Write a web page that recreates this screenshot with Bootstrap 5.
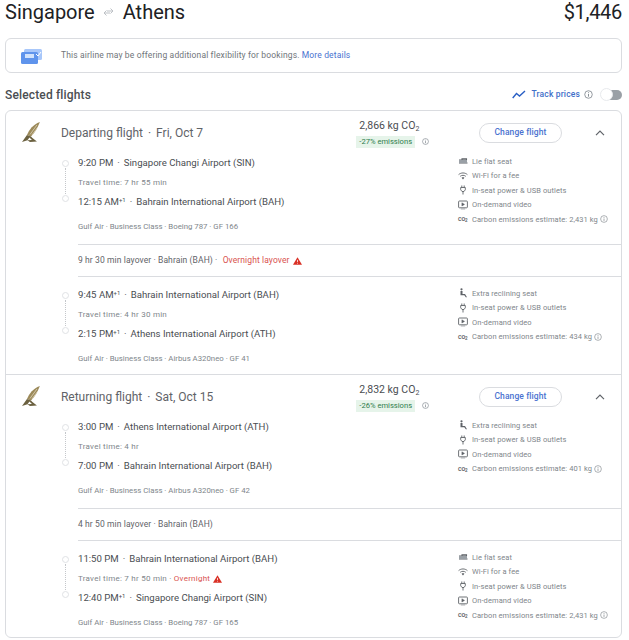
<!DOCTYPE html>
<html lang="en">

<head>
    <meta charset="UTF-8">
    <meta name="viewport" content="width=device-width, initial-scale=1">
    <title>Selected flights</title>
    <link href="https://cdn.jsdelivr.net/npm/bootstrap@5.3.0/dist/css/bootstrap.min.css" rel="stylesheet">
    <style>
        body { font-family: Roboto, "Liberation Sans", sans-serif; color: #3c4043; font-size: 10px; background: #fff; }
        .page-wrap { padding: 0 7px 0 5px; }
        .trip-head { height: 38px; padding-top: 1px; color: #202124; font-size: 20px; line-height: 22px; }
        .swap-icon { margin: 0 9px 0 8px; }
        .trip-price { font-size: 20px; letter-spacing: -.3px; }
        .notice-card { height: 35px; border-color: #dadce0; border-radius: 6px; padding-left: 15px; font-size: 8.5px; letter-spacing: .14px; color: #70757a; }
        .notice-card a { color: #4a72d0; text-decoration: none; }
        .notice-text { margin-left: 19px; }
        .sel-head { height: 37px; padding-top: 6px; font-size: 12px; font-weight: 500; color: #4a4e52; letter-spacing: .15px; }
        .track-label { color: #3f6fc9; font-size: 8.5px; margin: 0 4px 0 6px; }
        .fake-switch { width: 21px; height: 10px; margin-left: 4px; background: #9aa0a6; border-radius: 5px; position: relative; }
        .fake-switch::before { content: ""; position: absolute; left: -1px; top: -2px; width: 13px; height: 13px; border-radius: 50%; background: #fff; border: 1px solid #e8eaed; }
        .flights-card { border-color: #dadce0; border-radius: 6px; height: 528px; }
        .flight-part { border-bottom: 1px solid #dadce0; }
        .flight-part:last-child { border-bottom: 0; }
        .part-head { height: 41px; padding: 2px 0 0 16px; }
        .air-logo { width: 18px; margin-top: -2px; }
        .part-title { width: 300px; margin-left: 21px; font-size: 12px; color: #5f6368; padding-top: 1px; }
        .title-dot { margin: 0 5px; }
        .co2-box { width: 120px; margin-top: 2px; }
        .co2-num { font-size: 10.5px; line-height: 14px; color: #4a4e52; }
        .co2-num sub { font-size: 7px; }
        .co2-pill { display: inline-block; background: #e6f4ea; color: #2e7d4a; font-size: 7.6px; line-height: 12px; padding: 0 3px; margin-left: -3px; }
        .change-btn { width: 84px; height: 20px; padding: 0; font-size: 8.5px; font-weight: 500; color: #4a72d0; border: 1px solid #dadce0; border-radius: 10px; letter-spacing: .1px; }
        .chev-box { width: 59px; }
        .seg-row { margin-left: 54px; padding: 1px 0 7px; }
        .seg-row.pad-top { padding-top: 8px; }
        .seg-row.pad-end { padding-bottom: 5px; }
        .seg-row.pad-none { padding-bottom: 0; }
        .time-col { width: 18px; padding: 7px 0 0 2px; }
        .tl-dot { width: 7px; height: 7px; border: 1px solid #e0e2e5; border-radius: 50%; flex-shrink: 0; }
        .tl-line { height: 26px; margin: 1px 0 1px 3px; border-left: 1px dotted #c4c7cb; }
        .info-col { width: 380px; }
        .seg-time { height: 20px; line-height: 20px; font-size: 9.6px; color: #4a4e52; }
        .seg-time sup { font-size: 6px; top: -.5em; }
        .seg-time .mid-dot { margin: 0 4px; color: #5f6368; }
        .seg-travel { height: 19px; line-height: 20px; font-size: 8px; color: #80868b; letter-spacing: .25px; }
        .seg-carrier { height: 20px; line-height: 20px; margin-top: 5px; font-size: 7.8px; color: #80868b; }
        .red-note { color: #d9534f; }
        .amen-col { padding-top: 1px; }
        .amen-item { height: 14.5px; font-size: 7.5px; color: #80868b; letter-spacing: .08px; }
        .amen-item svg:first-child { width: 10px; margin-right: 4px; }
        .co2-glyph { width: 10px; margin-right: 4px; font-size: 5.5px; font-weight: 700; color: #5f6368; letter-spacing: -.2px; }
        .co2-glyph sub { font-size: 4.5px; }
        .info-ic { margin-left: 2px; }
        .lay-row { margin-left: 72px; height: 33px; font-size: 8.5px; letter-spacing: .1px; color: #5f6368; border-top: 1px solid #dadce0; border-bottom: 1px solid #dadce0; }
        .lay-row .red-note { margin-left: 3px; }
        .warn-ic { margin-left: 3px; }
    </style>
</head>

<body>
    <svg width="0" height="0" class="d-block">
        <symbol id="i-info" viewBox="0 0 10 10"><circle cx="5" cy="5" r="4.2" fill="none" stroke="currentColor" stroke-width=".8"/><path d="M5 4.400v3M5 2.500v1" stroke="currentColor" stroke-width=".9"/></symbol>
        <symbol id="i-flat" viewBox="0 0 10 10"><path d="M1 4h8M1 7h8.500M4 4V2.800h4.500V4" fill="none" stroke="#5f6368" stroke-width="1.100"/><rect x="1" y="4" width="8" height="3" fill="#9aa0a6"/></symbol>
        <symbol id="i-wifi" viewBox="0 0 10 10"><path d="M.6 3.600c2.500-2.200 6.300-2.200 8.800 0M2.200 5.300c1.600-1.300 4-1.300 5.600 0" fill="none" stroke="#5f6368" stroke-width=".9"/><path d="M5 8.500 3.600 6.800c.8-.6 2-.6 2.800 0z" fill="#5f6368"/></symbol>
        <symbol id="i-plug" viewBox="0 0 10 10"><path d="M3.800.5v2M6.200.5v2M2.700 2.500h4.600v2.300L6 6.500H4L2.700 4.800zM5 6.500v3" fill="none" stroke="#5f6368" stroke-width=".9"/></symbol>
        <symbol id="i-video" viewBox="0 0 10 10"><rect x=".6" y="1" width="8.800" height="6.800" rx=".8" fill="none" stroke="#5f6368" stroke-width=".9"/><path d="M3.900 2.800 6.500 4.400 3.900 6zM2.800 9h4.400" fill="#5f6368" stroke="#5f6368" stroke-width=".5"/></symbol>
        <symbol id="i-seat" viewBox="0 0 10 10"><circle cx="3.500" cy="1.300" r="1.100" fill="#5f6368"/><path d="M2.500 3h2v3h2.500L9 9.200H7.800L6.300 7.300H2.500z" fill="#5f6368"/></symbol>
        <symbol id="i-warn" viewBox="0 0 12 10"><path d="M6 0 12 10H0z" fill="#d93025"/><path d="M6 3.500v3M6 7.500v1" stroke="#fff" stroke-width="1"/></symbol>
        <symbol id="i-bird" viewBox="0 0 18 20"><path d="M18 0C15 1 10 4 7 9L5 13l4 1.500C13 11 15.500 6 18 0z" fill="#9c8a5a"/><path d="M15 3 8 12.500M16 5 10 13" stroke="#e6dec8" stroke-width=".7"/><path d="M5 13 0 20l5.500-1.800L8 20l7-.5-4.500-3.500-1.500-1.500z" fill="#6b6140"/><path d="M5.500 18.200 7.500 15.500 10 18z" fill="#fff"/></symbol>
        <symbol id="i-chev" viewBox="0 0 10 6"><path d="M1 5.200 5 1.200l4 4" fill="none" stroke="#5f6368" stroke-width="1.200"/></symbol>
    </svg>

    <div class="page-wrap">
        <!-- Route and price -->
        <div class="trip-head d-flex justify-content-between">
            <div class="d-flex align-items-start">
                <span>Singapore</span>
                <svg class="swap-icon mt-1" width="11" height="14" viewBox="0 0 11 14"><path d="M3.500 5.500 1 8l2.500 2.500M1 8h6M7.500 3.500 10 6 7.500 8.500M10 6H4" fill="none" stroke="#bdc1c6" stroke-width="1"/></svg>
                <span>Athens</span>
            </div>
            <span class="trip-price">$1,446</span>
        </div>

        <!-- Flexibility notice -->
        <div class="card notice-card flex-row align-items-center">
            <svg width="21" height="16" viewBox="0 0 21 16"><rect x="3" y="1" width="18" height="11" rx="1.500" fill="#a8c7fa"/><rect x="0" y="4" width="17" height="12" rx="1.500" fill="#5f94ec"/><rect x="4" y="6" width="9" height="4" fill="#d2e3fc"/><path d="M15 6l2 2 3-4" fill="none" stroke="#fff" stroke-width="1"/></svg>
            <span class="notice-text">This airline may be offering additional flexibility for bookings. <a href="#">More details</a></span>
        </div>

        <!-- Selected flights title -->
        <div class="sel-head d-flex justify-content-between align-items-center">
            <span>Selected flights</span>
            <div class="d-flex align-items-center">
                <svg width="14" height="9" viewBox="0 0 14 9"><path d="M.7 8 4.500 3.500l3 2.500L13 1" fill="none" stroke="#2a5fc4" stroke-width="1.400"/></svg>
                <span class="track-label">Track prices</span>
                <svg width="9" height="9" class="text-secondary"><use href="#i-info"/></svg>
                <span class="fake-switch ms-2"></span>
            </div>
        </div>

        <div class="card flights-card">
            <!-- Departing -->
            <div class="flight-part">
                <div class="part-head d-flex align-items-center">
                    <svg class="air-logo" height="20"><use href="#i-bird"/></svg>
                    <div class="part-title">Departing flight<span class="title-dot">·</span>Fri, Oct 7</div>
                    <div class="co2-box">
                        <div class="co2-num">2,866 kg CO<sub>2</sub></div>
                        <span class="co2-pill">-27% emissions</span>
                        <svg width="7" height="7" class="text-secondary ms-1"><use href="#i-info"/></svg>
                    </div>
                    <button class="btn change-btn" type="button">Change flight</button>
                    <div class="chev-box text-center ps-3"><svg width="10" height="6"><use href="#i-chev"/></svg></div>
                </div>
                <div class="seg-row d-flex">
                    <div class="time-col d-flex flex-column"><span class="tl-dot"></span><span class="tl-line"></span><span class="tl-dot"></span></div>
                    <div class="info-col">
                        <div class="seg-time">9:20 PM<span class="mid-dot">·</span>Singapore Changi Airport (SIN)</div>
                        <div class="seg-travel">Travel time: 7 hr 55 min</div>
                        <div class="seg-time">12:15 AM<sup>+1</sup><span class="mid-dot">·</span>Bahrain International Airport (BAH)</div>
                        <div class="seg-carrier">Gulf Air · Business Class · Boeing 787 · GF 166</div>
                    </div>
                    <div class="amen-col">
                        <div class="amen-item d-flex align-items-center"><svg height="10"><use href="#i-flat"/></svg>Lie flat seat</div>
                        <div class="amen-item d-flex align-items-center"><svg height="10"><use href="#i-wifi"/></svg>Wi-Fi for a fee</div>
                        <div class="amen-item d-flex align-items-center"><svg height="10"><use href="#i-plug"/></svg>In-seat power &amp; USB outlets</div>
                        <div class="amen-item d-flex align-items-center"><svg height="10"><use href="#i-video"/></svg>On-demand video</div>
                        <div class="amen-item d-flex align-items-center"><span class="co2-glyph">CO<sub>2</sub></span>Carbon emissions estimate: 2,431 kg<svg class="info-ic" width="8" height="8"><use href="#i-info"/></svg></div>
                    </div>
                </div>
                <div class="lay-row d-flex align-items-center">9 hr 30 min layover · Bahrain (BAH) ·&nbsp;<span class="red-note">Overnight layover</span><svg class="warn-ic" width="9" height="8"><use href="#i-warn"/></svg></div>
                <div class="seg-row pad-top pad-end d-flex">
                    <div class="time-col d-flex flex-column"><span class="tl-dot"></span><span class="tl-line"></span><span class="tl-dot"></span></div>
                    <div class="info-col">
                        <div class="seg-time">9:45 AM<sup>+1</sup><span class="mid-dot">·</span>Bahrain International Airport (BAH)</div>
                        <div class="seg-travel">Travel time: 4 hr 30 min</div>
                        <div class="seg-time">2:15 PM<sup>+1</sup><span class="mid-dot">·</span>Athens International Airport (ATH)</div>
                        <div class="seg-carrier">Gulf Air · Business Class · Airbus A320neo · GF 41</div>
                    </div>
                    <div class="amen-col">
                        <div class="amen-item d-flex align-items-center"><svg height="10"><use href="#i-seat"/></svg>Extra reclining seat</div>
                        <div class="amen-item d-flex align-items-center"><svg height="10"><use href="#i-plug"/></svg>In-seat power &amp; USB outlets</div>
                        <div class="amen-item d-flex align-items-center"><svg height="10"><use href="#i-video"/></svg>On-demand video</div>
                        <div class="amen-item d-flex align-items-center"><span class="co2-glyph">CO<sub>2</sub></span>Carbon emissions estimate: 434 kg<svg class="info-ic" width="8" height="8"><use href="#i-info"/></svg></div>
                    </div>
                </div>
            </div>

            <!-- Returning -->
            <div class="flight-part">
                <div class="part-head d-flex align-items-center">
                    <svg class="air-logo" height="20"><use href="#i-bird"/></svg>
                    <div class="part-title">Returning flight<span class="title-dot">·</span>Sat, Oct 15</div>
                    <div class="co2-box">
                        <div class="co2-num">2,832 kg CO<sub>2</sub></div>
                        <span class="co2-pill">-26% emissions</span>
                        <svg width="7" height="7" class="text-secondary ms-1"><use href="#i-info"/></svg>
                    </div>
                    <button class="btn change-btn" type="button">Change flight</button>
                    <div class="chev-box text-center ps-3"><svg width="10" height="6"><use href="#i-chev"/></svg></div>
                </div>
                <div class="seg-row d-flex">
                    <div class="time-col d-flex flex-column"><span class="tl-dot"></span><span class="tl-line"></span><span class="tl-dot"></span></div>
                    <div class="info-col">
                        <div class="seg-time">3:00 PM<span class="mid-dot">·</span>Athens International Airport (ATH)</div>
                        <div class="seg-travel">Travel time: 4 hr</div>
                        <div class="seg-time">7:00 PM<span class="mid-dot">·</span>Bahrain International Airport (BAH)</div>
                        <div class="seg-carrier">Gulf Air · Business Class · Airbus A320neo · GF 42</div>
                    </div>
                    <div class="amen-col">
                        <div class="amen-item d-flex align-items-center"><svg height="10"><use href="#i-seat"/></svg>Extra reclining seat</div>
                        <div class="amen-item d-flex align-items-center"><svg height="10"><use href="#i-plug"/></svg>In-seat power &amp; USB outlets</div>
                        <div class="amen-item d-flex align-items-center"><svg height="10"><use href="#i-video"/></svg>On-demand video</div>
                        <div class="amen-item d-flex align-items-center"><span class="co2-glyph">CO<sub>2</sub></span>Carbon emissions estimate: 401 kg<svg class="info-ic" width="8" height="8"><use href="#i-info"/></svg></div>
                    </div>
                </div>
                <div class="lay-row d-flex align-items-center">4 hr 50 min layover · Bahrain (BAH)</div>
                <div class="seg-row pad-top pad-none d-flex">
                    <div class="time-col d-flex flex-column"><span class="tl-dot"></span><span class="tl-line"></span><span class="tl-dot"></span></div>
                    <div class="info-col">
                        <div class="seg-time">11:50 PM<span class="mid-dot">·</span>Bahrain International Airport (BAH)</div>
                        <div class="seg-travel d-flex align-items-center">Travel time: 7 hr 50 min ·&nbsp;<span class="red-note">Overnight</span><svg class="warn-ic" width="9" height="8"><use href="#i-warn"/></svg></div>
                        <div class="seg-time">12:40 PM<sup>+1</sup><span class="mid-dot">·</span>Singapore Changi Airport (SIN)</div>
                        <div class="seg-carrier">Gulf Air · Business Class · Boeing 787 · GF 165</div>
                    </div>
                    <div class="amen-col">
                        <div class="amen-item d-flex align-items-center"><svg height="10"><use href="#i-flat"/></svg>Lie flat seat</div>
                        <div class="amen-item d-flex align-items-center"><svg height="10"><use href="#i-wifi"/></svg>Wi-Fi for a fee</div>
                        <div class="amen-item d-flex align-items-center"><svg height="10"><use href="#i-plug"/></svg>In-seat power &amp; USB outlets</div>
                        <div class="amen-item d-flex align-items-center"><svg height="10"><use href="#i-video"/></svg>On-demand video</div>
                        <div class="amen-item d-flex align-items-center"><span class="co2-glyph">CO<sub>2</sub></span>Carbon emissions estimate: 2,431 kg<svg class="info-ic" width="8" height="8"><use href="#i-info"/></svg></div>
                    </div>
                </div>
            </div>
        </div>
    </div>

    <script src="https://cdn.jsdelivr.net/npm/bootstrap@5.3.0/dist/js/bootstrap.bundle.min.js"></script>
</body>

</html>
